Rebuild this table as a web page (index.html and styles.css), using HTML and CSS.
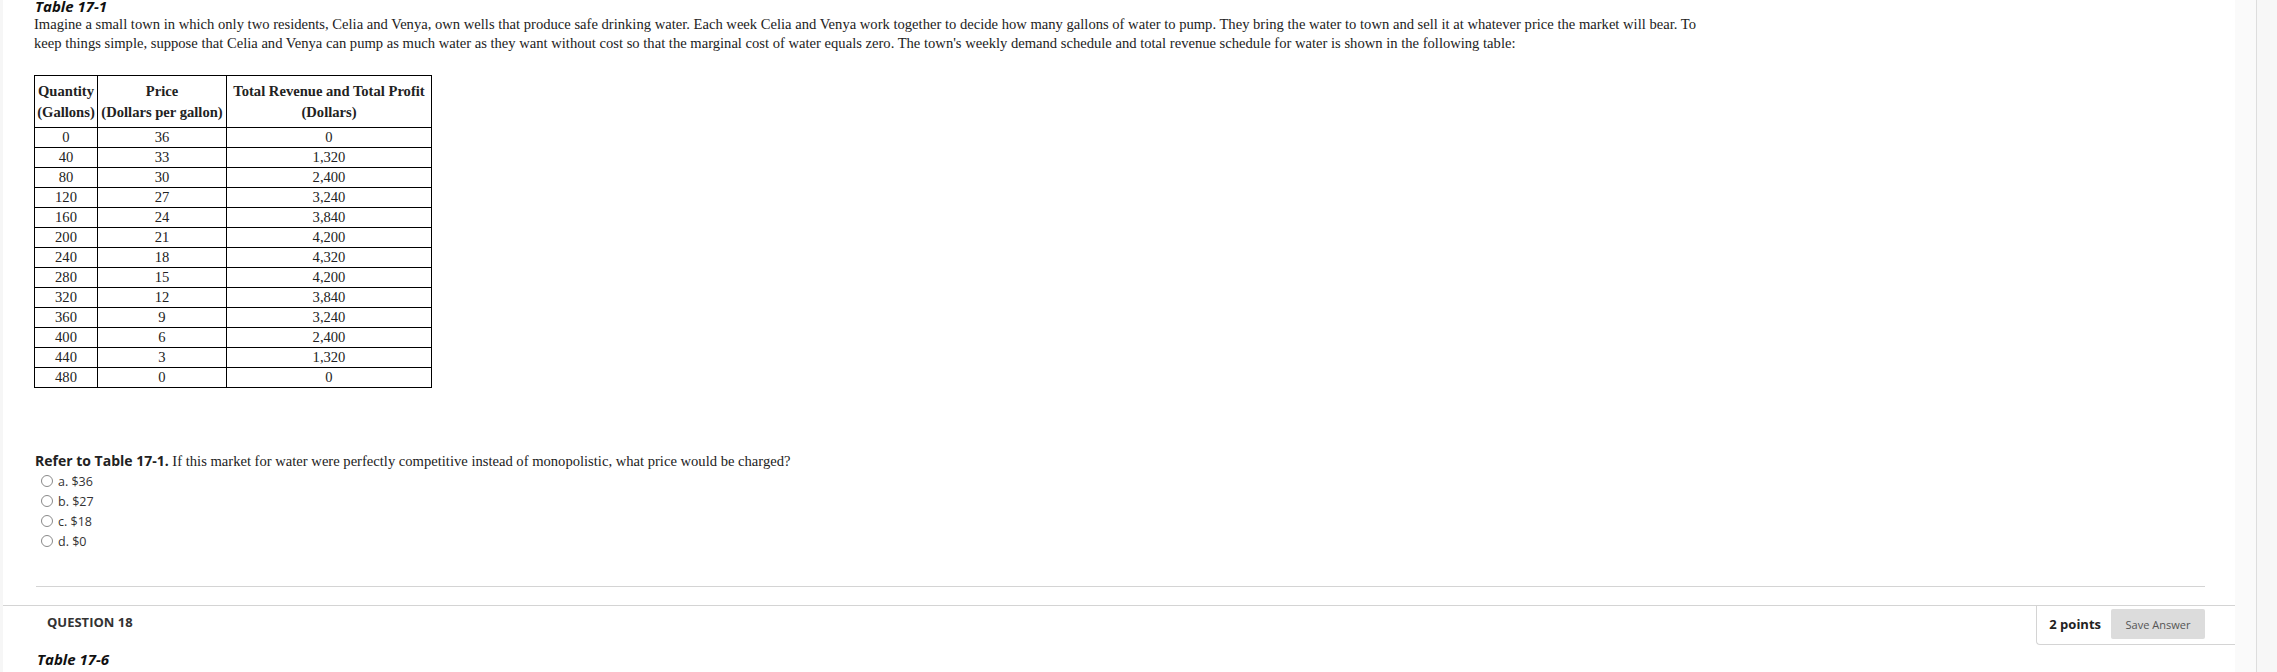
FILE: index.html
```html
<!DOCTYPE html>
<html lang="en">
<head>
  <meta charset="UTF-8" />
  <title>Question 17</title>
  <link rel="stylesheet" href="styles.css">
</head>
<body>

  <div class="page">
    <div class="edge"></div>

    <div class="main">
      <div class="question-body">
        <h4 class="table-title">Table 17-1</h4>
        <p class="intro">Imagine a small town in which only two residents, Celia and Venya, own wells that produce safe drinking water. Each week Celia and Venya work together to decide how many gallons of water to pump. They bring the water to town and sell it at whatever price the market will bear. To<br>keep things simple, suppose that Celia and Venya can pump as much water as they want without cost so that the marginal cost of water equals zero. The town's weekly demand schedule and total revenue schedule for water is shown in the following table:</p>

        <table class="data">
          <thead>
            <tr>
              <th class="c1">Quantity<br>(Gallons)</th>
              <th class="c2">Price<br>(Dollars per gallon)</th>
              <th class="c3">Total Revenue and Total Profit<br>(Dollars)</th>
            </tr>
          </thead>
          <tbody>
            <tr><td>0</td><td>36</td><td>0</td></tr>
            <tr><td>40</td><td>33</td><td>1,320</td></tr>
            <tr><td>80</td><td>30</td><td>2,400</td></tr>
            <tr><td>120</td><td>27</td><td>3,240</td></tr>
            <tr><td>160</td><td>24</td><td>3,840</td></tr>
            <tr><td>200</td><td>21</td><td>4,200</td></tr>
            <tr><td>240</td><td>18</td><td>4,320</td></tr>
            <tr><td>280</td><td>15</td><td>4,200</td></tr>
            <tr><td>320</td><td>12</td><td>3,840</td></tr>
            <tr><td>360</td><td>9</td><td>3,240</td></tr>
            <tr><td>400</td><td>6</td><td>2,400</td></tr>
            <tr><td>440</td><td>3</td><td>1,320</td></tr>
            <tr><td>480</td><td>0</td><td>0</td></tr>
          </tbody>
        </table>

        <p class="prompt"><b>Refer to Table 17-1.</b> If this market for water were perfectly competitive instead of monopolistic, what price would be charged?</p>

        <ul class="choices">
          <li><span class="radio"></span>a. $36</li>
          <li><span class="radio"></span>b. $27</li>
          <li><span class="radio"></span>c. $18</li>
          <li><span class="radio"></span>d. $0</li>
        </ul>

        <hr class="sep">
      </div>

      <div class="question-head">
        <h3>QUESTION 18</h3>
        <div class="points">
          <span class="pts">2 points</span>
          <button class="save">Save Answer</button>
        </div>
      </div>

      <div class="question-body">
        <h4 class="table-title next">Table 17-6</h4>
      </div>
    </div>

    <div class="gutter"></div>
    <div class="rail"></div>
  </div>

</body>
</html>
```

FILE: styles.css
```css
body {
  margin: 0;
  background: #fff;
  color: #222;
  font-family: "Liberation Serif", "Times New Roman", serif;
  font-size: 14.6px;
  overflow: hidden;
}

.page {
  display: flex;
  min-height: 672px;
}

.edge {
  width: 3px;
  background: #f6f6f6;
}

.main {
  width: 2232px;
}

.gutter {
  width: 21px;
  background: #fafafa;
}

.rail {
  flex: 1;
  border-left: 1px solid #ddd;
  background: #f7f7f7;
}

.question-body {
  padding-left: 31px;
  width: 2171px;
}

.table-title {
  margin: -3px 0 0 1px;
  font-family: "Open Sans", sans-serif;
  font-style: italic;
  font-weight: 700;
  font-size: 15px;
  line-height: 18px;
  color: #111;
}

.intro {
  margin: 0;
  line-height: 18.7px;
  color: #222;
}

.data {
  border-collapse: collapse;
  margin-top: 23px;
  color: #222;
}

.data th,
.data td {
  border: 1px solid #000;
  text-align: center;
  padding: 0 2px;
}

.data th {
  font-weight: 700;
  height: 51px;
  line-height: 21px;
}

.data td {
  height: 19px;
  line-height: 19px;
}

.c1 { width: 58px; }
.c2 { width: 124px; }
.c3 { width: 200px; }

.prompt {
  margin: 63px 0 0 1px;
  line-height: 20px;
}

.prompt b {
  font-family: "Open Sans", sans-serif;
  font-size: 14px;
  color: #222;
}

.choices {
  list-style: none;
  margin: 0;
  padding: 0 0 0 7px;
  font-family: "Open Sans", sans-serif;
  font-size: 12.5px;
  color: #333;
}

.choices li {
  display: flex;
  align-items: center;
  height: 20px;
}

.radio {
  width: 10px;
  height: 10px;
  border: 1px solid #8a8a8a;
  border-radius: 50%;
  margin-right: 5px;
  background: #fff;
}

.sep {
  border: none;
  border-top: 1px solid #d4d4d4;
  margin: 35px 0 0 2px;
  height: 0;
}

.question-head {
  margin-top: 18px;
  border-top: 1px solid #d4d4d4;
  display: flex;
  justify-content: space-between;
  align-items: flex-start;
}

.question-head h3 {
  margin: 8px 0 0 44px;
  font-family: "Open Sans", sans-serif;
  font-size: 13px;
  font-weight: 700;
  color: #333;
  line-height: 16px;
}

.points {
  display: flex;
  align-items: center;
  gap: 10px;
  padding: 3px 30px 5px 12px;
  border-left: 1px solid #d4d4d4;
  border-bottom: 1px solid #d4d4d4;
  border-bottom-left-radius: 4px;
}

.pts {
  font-family: "Open Sans", sans-serif;
  font-weight: 700;
  font-size: 13px;
  color: #222;
}

.save {
  font-family: "Open Sans", sans-serif;
  font-size: 11px;
  color: #555;
  background: #dcdcdc;
  border: none;
  border-radius: 2px;
  width: 94px;
  height: 30px;
  padding: 0;
}

.table-title.next {
  margin: 5px 0 0 3px;
}
```
